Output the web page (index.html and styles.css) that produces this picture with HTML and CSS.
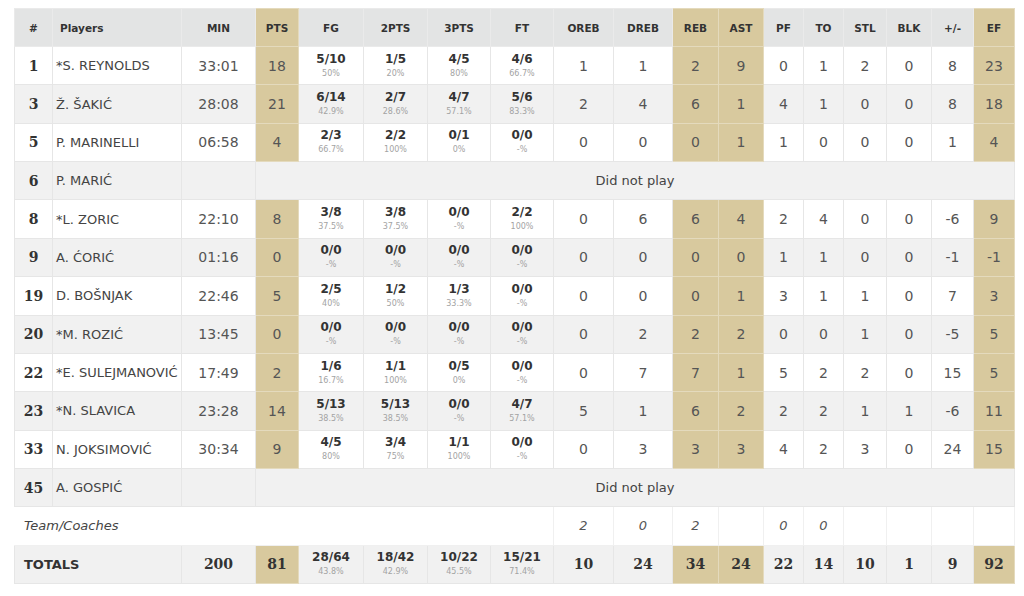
FILE: index.html
```html
<!DOCTYPE html>
<html>
<head>
<meta charset="utf-8">
<link rel="stylesheet" href="styles.css">
</head>
<body>
<table class="box">
<colgroup>
<col class="c-no"><col class="c-name"><col class="c-min"><col class="c-pts"><col class="c-fg"><col class="c-2p"><col class="c-3p"><col class="c-ft"><col class="c-oreb"><col class="c-dreb"><col class="c-reb"><col class="c-ast"><col class="c-pf"><col class="c-to"><col class="c-stl"><col class="c-blk"><col class="c-pm"><col class="c-ef">
</colgroup>
<thead>
<tr class="head">
<th>#</th><th class="left">Players</th><th>MIN</th><th class="gold">PTS</th><th>FG</th><th>2PTS</th><th>3PTS</th><th>FT</th><th>OREB</th><th>DREB</th><th class="gold">REB</th><th class="gold">AST</th><th>PF</th><th>TO</th><th>STL</th><th>BLK</th><th>+/-</th><th class="gold">EF</th>
</tr>
</thead>
<tbody>
<tr class="odd">
<td class="no">1</td><td class="name">*S. REYNOLDS</td><td class="min">33:01</td><td class="gold">18</td>
<td><span class="fr">5/10</span><span class="pc">50%</span></td><td><span class="fr">1/5</span><span class="pc">20%</span></td><td><span class="fr">4/5</span><span class="pc">80%</span></td><td><span class="fr">4/6</span><span class="pc">66.7%</span></td>
<td>1</td><td>1</td><td class="gold">2</td><td class="gold">9</td><td>0</td><td>1</td><td>2</td><td>0</td><td>8</td><td class="gold">23</td>
</tr>
<tr class="even">
<td class="no">3</td><td class="name">Ž. ŠAKIĆ</td><td class="min">28:08</td><td class="gold">21</td>
<td><span class="fr">6/14</span><span class="pc">42.9%</span></td><td><span class="fr">2/7</span><span class="pc">28.6%</span></td><td><span class="fr">4/7</span><span class="pc">57.1%</span></td><td><span class="fr">5/6</span><span class="pc">83.3%</span></td>
<td>2</td><td>4</td><td class="gold">6</td><td class="gold">1</td><td>4</td><td>1</td><td>0</td><td>0</td><td>8</td><td class="gold">18</td>
</tr>
<tr class="odd">
<td class="no">5</td><td class="name">P. MARINELLI</td><td class="min">06:58</td><td class="gold">4</td>
<td><span class="fr">2/3</span><span class="pc">66.7%</span></td><td><span class="fr">2/2</span><span class="pc">100%</span></td><td><span class="fr">0/1</span><span class="pc">0%</span></td><td><span class="fr">0/0</span><span class="pc">-%</span></td>
<td>0</td><td>0</td><td class="gold">0</td><td class="gold">1</td><td>1</td><td>0</td><td>0</td><td>0</td><td>1</td><td class="gold">4</td>
</tr>
<tr class="even">
<td class="no">6</td><td class="name">P. MARIĆ</td><td class="min"></td><td colspan="15" class="dnp">Did not play</td>
</tr>
<tr class="odd">
<td class="no">8</td><td class="name">*L. ZORIC</td><td class="min">22:10</td><td class="gold">8</td>
<td><span class="fr">3/8</span><span class="pc">37.5%</span></td><td><span class="fr">3/8</span><span class="pc">37.5%</span></td><td><span class="fr">0/0</span><span class="pc">-%</span></td><td><span class="fr">2/2</span><span class="pc">100%</span></td>
<td>0</td><td>6</td><td class="gold">6</td><td class="gold">4</td><td>2</td><td>4</td><td>0</td><td>0</td><td>-6</td><td class="gold">9</td>
</tr>
<tr class="even">
<td class="no">9</td><td class="name">A. ĆORIĆ</td><td class="min">01:16</td><td class="gold">0</td>
<td><span class="fr">0/0</span><span class="pc">-%</span></td><td><span class="fr">0/0</span><span class="pc">-%</span></td><td><span class="fr">0/0</span><span class="pc">-%</span></td><td><span class="fr">0/0</span><span class="pc">-%</span></td>
<td>0</td><td>0</td><td class="gold">0</td><td class="gold">0</td><td>1</td><td>1</td><td>0</td><td>0</td><td>-1</td><td class="gold">-1</td>
</tr>
<tr class="odd">
<td class="no">19</td><td class="name">D. BOŠNJAK</td><td class="min">22:46</td><td class="gold">5</td>
<td><span class="fr">2/5</span><span class="pc">40%</span></td><td><span class="fr">1/2</span><span class="pc">50%</span></td><td><span class="fr">1/3</span><span class="pc">33.3%</span></td><td><span class="fr">0/0</span><span class="pc">-%</span></td>
<td>0</td><td>0</td><td class="gold">0</td><td class="gold">1</td><td>3</td><td>1</td><td>1</td><td>0</td><td>7</td><td class="gold">3</td>
</tr>
<tr class="even">
<td class="no">20</td><td class="name">*M. ROZIĆ</td><td class="min">13:45</td><td class="gold">0</td>
<td><span class="fr">0/0</span><span class="pc">-%</span></td><td><span class="fr">0/0</span><span class="pc">-%</span></td><td><span class="fr">0/0</span><span class="pc">-%</span></td><td><span class="fr">0/0</span><span class="pc">-%</span></td>
<td>0</td><td>2</td><td class="gold">2</td><td class="gold">2</td><td>0</td><td>0</td><td>1</td><td>0</td><td>-5</td><td class="gold">5</td>
</tr>
<tr class="odd">
<td class="no">22</td><td class="name">*E. SULEJMANOVIĆ</td><td class="min">17:49</td><td class="gold">2</td>
<td><span class="fr">1/6</span><span class="pc">16.7%</span></td><td><span class="fr">1/1</span><span class="pc">100%</span></td><td><span class="fr">0/5</span><span class="pc">0%</span></td><td><span class="fr">0/0</span><span class="pc">-%</span></td>
<td>0</td><td>7</td><td class="gold">7</td><td class="gold">1</td><td>5</td><td>2</td><td>2</td><td>0</td><td>15</td><td class="gold">5</td>
</tr>
<tr class="even">
<td class="no">23</td><td class="name">*N. SLAVICA</td><td class="min">23:28</td><td class="gold">14</td>
<td><span class="fr">5/13</span><span class="pc">38.5%</span></td><td><span class="fr">5/13</span><span class="pc">38.5%</span></td><td><span class="fr">0/0</span><span class="pc">-%</span></td><td><span class="fr">4/7</span><span class="pc">57.1%</span></td>
<td>5</td><td>1</td><td class="gold">6</td><td class="gold">2</td><td>2</td><td>2</td><td>1</td><td>1</td><td>-6</td><td class="gold">11</td>
</tr>
<tr class="odd">
<td class="no">33</td><td class="name">N. JOKSIMOVIĆ</td><td class="min">30:34</td><td class="gold">9</td>
<td><span class="fr">4/5</span><span class="pc">80%</span></td><td><span class="fr">3/4</span><span class="pc">75%</span></td><td><span class="fr">1/1</span><span class="pc">100%</span></td><td><span class="fr">0/0</span><span class="pc">-%</span></td>
<td>0</td><td>3</td><td class="gold">3</td><td class="gold">3</td><td>4</td><td>2</td><td>3</td><td>0</td><td>24</td><td class="gold">15</td>
</tr>
<tr class="even">
<td class="no">45</td><td class="name">A. GOSPIĆ</td><td class="min"></td><td colspan="15" class="dnp">Did not play</td>
</tr>
<tr class="odd team">
<td colspan="8" class="team-label">Team/Coaches</td>
<td>2</td><td>0</td><td>2</td><td></td><td>0</td><td>0</td><td></td><td></td><td></td><td></td>
</tr>
<tr class="even totals">
<td colspan="2" class="tot-label">TOTALS</td><td class="tnum">200</td><td class="gold tnum">81</td>
<td><span class="fr">28/64</span><span class="pc">43.8%</span></td><td><span class="fr">18/42</span><span class="pc">42.9%</span></td><td><span class="fr">10/22</span><span class="pc">45.5%</span></td><td><span class="fr">15/21</span><span class="pc">71.4%</span></td>
<td class="tnum">10</td><td class="tnum">24</td><td class="gold tnum">34</td><td class="gold tnum">24</td><td class="tnum">22</td><td class="tnum">14</td><td class="tnum">10</td><td class="tnum">1</td><td class="tnum">9</td><td class="gold tnum">92</td>
</tr>
</tbody>
</table>
</body>
</html>
```
FILE: styles.css
```css
html, body {
  margin: 0;
  padding: 0;
  background: #ffffff;
}
body {
  padding: 8px 0 0 14px;
  font-family: "DejaVu Sans", Verdana, sans-serif;
  color: #444;
}
.box {
  width: 1000px;
  table-layout: fixed;
  border-collapse: collapse;
}
.c-no { width: 38px; }
.c-name { width: 129px; }
.c-min { width: 74px; }
.c-pts { width: 43px; }
.c-fg { width: 65px; }
.c-2p { width: 64px; }
.c-3p { width: 63px; }
.c-ft { width: 63px; }
.c-oreb { width: 60px; }
.c-dreb { width: 59px; }
.c-reb { width: 46px; }
.c-ast { width: 45px; }
.c-pf { width: 40px; }
.c-to { width: 40px; }
.c-stl { width: 43px; }
.c-blk { width: 45px; }
.c-pm { width: 42px; }
.c-ef { width: 41px; }

th, td {
  border: 1px solid #e6e6e6;
  padding: 0;
  text-align: center;
  vertical-align: middle;
  white-space: nowrap;
}
.head {
  height: 38px;
  background: #e3e4e4;
}
.head th {
  font-size: 10.5px;
  font-weight: bold;
  color: #333;
  border-color: #eaeaea;
}
.head th.left {
  text-align: left;
  padding-left: 7px;
}
tbody tr {
  height: 38.36px;
}
.odd { background: #ffffff; }
.even { background: #f1f1f1; }

td {
  font-size: 14px;
  color: #555;
}
.gold, .head th.gold {
  background: #d8c99e;
  border-color: #e4dabd;
}
td.no {
  font-family: "DejaVu Serif", Georgia, serif;
  font-weight: bold;
  font-size: 14px;
  color: #333;
}
td.name {
  text-align: left;
  padding-left: 3px;
  font-size: 13px;
  color: #444;
}
td.min {
  font-size: 14px;
  color: #555;
}
.fr {
  display: block;
  font-size: 12px;
  font-weight: bold;
  line-height: 13px;
  color: #333;
}
.pc {
  display: block;
  margin-top: 2px;
  font-size: 8px;
  line-height: 11px;
  color: #a3a3a3;
}
td.dnp {
  font-size: 13px;
  color: #444;
}
.team td {
  font-style: italic;
  font-size: 13px;
  color: #555;
  border-color: #f0f0f0;
}
.team td.team-label {
  text-align: left;
  padding-left: 9px;
  color: #444;
  border-left-color: transparent;
}
.tot-label {
  text-align: left;
  padding-left: 9px;
  font-size: 13px;
  font-weight: bold;
  color: #333;
}
.tnum {
  font-family: "DejaVu Serif", Georgia, serif;
  font-weight: bold;
  font-size: 14px;
  color: #333;
}
```
